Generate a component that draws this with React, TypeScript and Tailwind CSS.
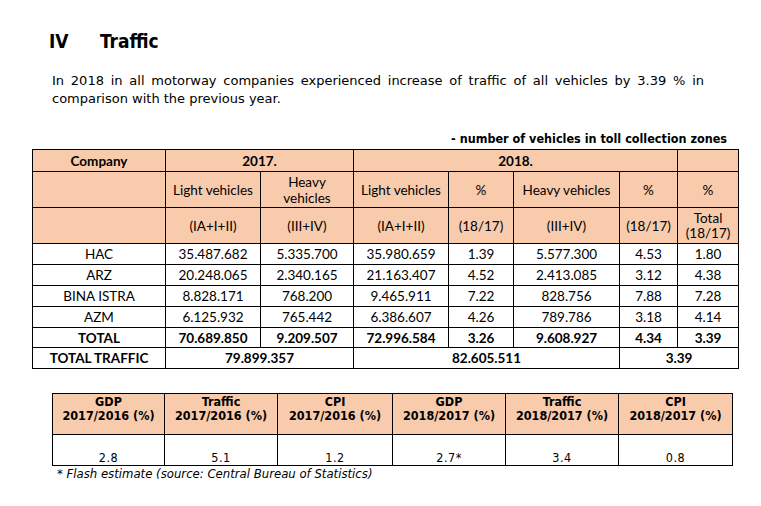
import React from "react";

const tahoma = "font-['DejaVu_Sans_Condensed','DejaVu_Sans',sans-serif] font-stretch-condensed";
const calibri = "font-['Lato','Liberation_Sans',sans-serif]";

const head = "border border-black bg-[#f8cbad] text-center p-0";
const cell = "border border-black text-center p-0";

type Row = { name: string; v: string[]; bold?: boolean };

const rows: Row[] = [
  { name: "HAC", v: ["35.487.682", "5.335.700", "35.980.659", "1.39", "5.577.300", "4.53", "1.80"] },
  { name: "ARZ", v: ["20.248.065", "2.340.165", "21.163.407", "4.52", "2.413.085", "3.12", "4.38"] },
  { name: "BINA ISTRA", v: ["8.828.171", "768.200", "9.465.911", "7.22", "828.756", "7.88", "7.28"] },
  { name: "AZM", v: ["6.125.932", "765.442", "6.386.607", "4.26", "789.786", "3.18", "4.14"] },
  { name: "TOTAL", v: ["70.689.850", "9.209.507", "72.996.584", "3.26", "9.608.927", "4.34", "3.39"], bold: true },
];

const macro = [
  { h1: "GDP", h2: "2017/2016 (%)", v: "2.8" },
  { h1: "Traffic", h2: "2017/2016 (%)", v: "5.1" },
  { h1: "CPI", h2: "2017/2016 (%)", v: "1.2" },
  { h1: "GDP", h2: "2018/2017 (%)", v: "2.7*" },
  { h1: "Traffic", h2: "2018/2017 (%)", v: "3.4" },
  { h1: "CPI", h2: "2018/2017 (%)", v: "0.8" },
];

export default function App() {
  return (
    <div className="w-[761px] h-[506px] bg-white text-black overflow-hidden">
      <h1 className={`${tahoma} pt-[29px] pl-[49px] text-[19px] leading-[24px] font-bold flex`}>
        <span className="w-[51px]">IV</span>
        <span>Traffic</span>
      </h1>

      <div className="font-['DejaVu_Sans',sans-serif] mt-[19px] ml-[52px] w-[652px] text-[13px] leading-[18px]">
        <p className="text-justify [text-align-last:justify]">
          In 2018 in all motorway companies experienced increase of traffic of all vehicles by 3.39 % in
        </p>
        <p>comparison with the previous year.</p>
      </div>

      <div className="ml-[32px] w-[706px]">
        <p className={`${tahoma} mt-[23px] pr-[11px] text-right text-[12.5px] leading-[16px] font-bold`}>
          - number of vehicles in toll collection zones
        </p>

        <table className={`${calibri} mt-[2px] w-[706px] table-fixed border-collapse text-[13.5px] leading-[16px]`}>
          <colgroup>
            <col className="w-[133px]" />
            <col className="w-[95px]" />
            <col className="w-[93px]" />
            <col className="w-[95px]" />
            <col className="w-[65px]" />
            <col className="w-[106px]" />
            <col className="w-[58px]" />
            <col className="w-[61px]" />
          </colgroup>
          <tbody>
            <tr className="h-[22px] font-bold">
              <td className={head}>Company</td>
              <td className={head} colSpan={2}>2017.</td>
              <td className={head} colSpan={4}>2018.</td>
              <td className={head}></td>
            </tr>
            <tr className="h-[36px]">
              <td className={head}></td>
              <td className={head}>Light vehicles</td>
              <td className={head}>Heavy<br />vehicles</td>
              <td className={head}>Light vehicles</td>
              <td className={head}>%</td>
              <td className={head}>Heavy vehicles</td>
              <td className={head}>%</td>
              <td className={head}>%</td>
            </tr>
            <tr className="h-[36px]">
              <td className={head}></td>
              <td className={head}>(IA+I+II)</td>
              <td className={head}>(III+IV)</td>
              <td className={head}>(IA+I+II)</td>
              <td className={head}>(18/17)</td>
              <td className={head}>(III+IV)</td>
              <td className={head}>(18/17)</td>
              <td className={`${head} leading-[15px]`}>Total<br />(18/17)</td>
            </tr>
            {rows.map((r) => (
              <tr key={r.name} className={`${r.bold ? "h-[20px] font-bold" : "h-[21px]"}`}>
                <td className={cell}>{r.name}</td>
                {r.v.map((x, i) => (
                  <td key={i} className={cell}>{x}</td>
                ))}
              </tr>
            ))}
            <tr className="h-[21px] font-bold">
              <td className={cell}>TOTAL TRAFFIC</td>
              <td className={cell} colSpan={2}>79.899.357</td>
              <td className={cell} colSpan={3}>82.605.511</td>
              <td className={cell} colSpan={2}>3.39</td>
            </tr>
          </tbody>
        </table>
      </div>

      <div className={`${tahoma} ml-[52px] mt-[24px]`}>
        <table className="w-[680px] table-fixed border-collapse text-[12.5px]">
          <colgroup>
            <col className="w-[112px]" />
            <col className="w-[113px]" />
            <col className="w-[115px]" />
            <col className="w-[113px]" />
            <col className="w-[113px]" />
            <col className="w-[114px]" />
          </colgroup>
          <tbody>
            <tr className="h-[41px]">
              {macro.map((m, i) => (
                <td key={i} className="border border-black bg-[#f8cbad] text-center align-top pt-[1px] px-0 font-bold leading-[14px]">
                  {m.h1}
                  <br />
                  {m.h2}
                </td>
              ))}
            </tr>
            <tr className="h-[31px]">
              {macro.map((m, i) => (
                <td key={i} className="border border-black text-center align-bottom p-0 leading-[15px] tracking-[0.5px]">
                  {m.v}
                </td>
              ))}
            </tr>
          </tbody>
        </table>
        <p className="pl-[5px] text-[13px] leading-[16px] italic">
          * Flash estimate (source: Central Bureau of Statistics)
        </p>
      </div>
    </div>
  );
}
